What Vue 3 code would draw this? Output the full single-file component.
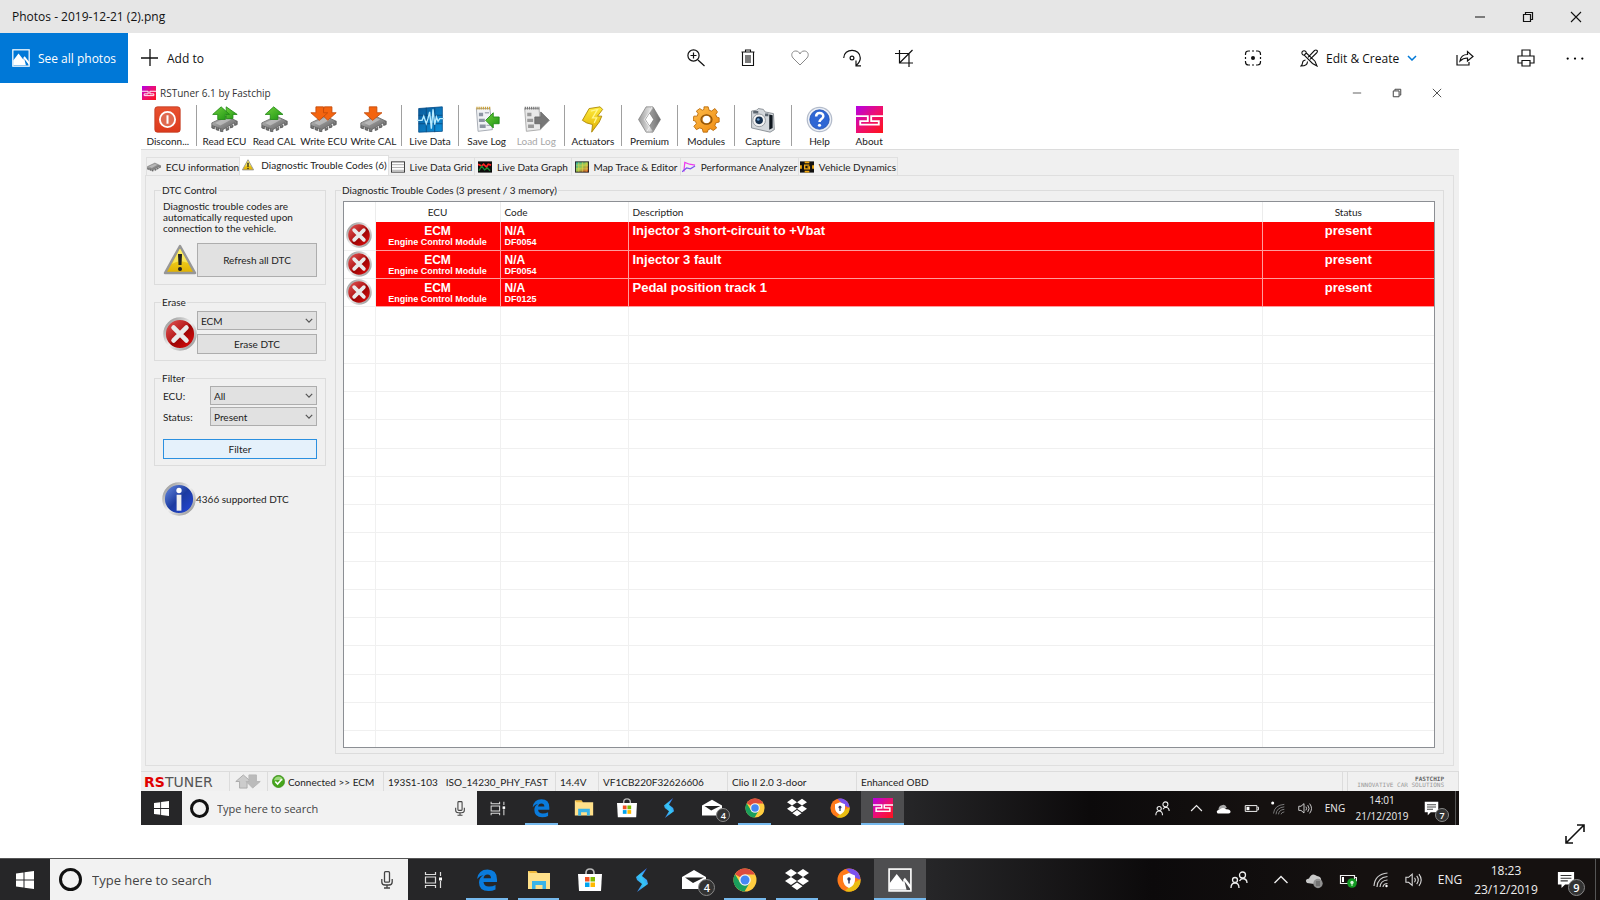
<script setup>
import { ref } from 'vue'

const groups = [
  [{ label: 'Disconn...', icon: 'power' }],
  [
    { label: 'Read ECU', icon: 'read-ecu' },
    { label: 'Read CAL', icon: 'read-cal' },
    { label: 'Write ECU', icon: 'write-ecu' },
    { label: 'Write CAL', icon: 'write-cal' },
  ],
  [{ label: 'Live Data', icon: 'live' }],
  [
    { label: 'Save Log', icon: 'save' },
    { label: 'Load Log', icon: 'load', disabled: true },
  ],
  [{ label: 'Actuators', icon: 'bolt' }],
  [{ label: 'Premium', icon: 'premium' }],
  [{ label: 'Modules', icon: 'gear' }],
  [{ label: 'Capture', icon: 'camera' }],
  [
    { label: 'Help', icon: 'help' },
    { label: 'About', icon: 'rs' },
  ],
]

const tabs = [
  { label: 'ECU information', icon: 'chip' },
  { label: 'Diagnostic Trouble Codes (6)', icon: 'warning', active: true },
  { label: 'Live Data Grid', icon: 'grid' },
  { label: 'Live Data Graph', icon: 'graph' },
  { label: 'Map Trace & Editor', icon: 'map' },
  { label: 'Performance Analyzer', icon: 'perf' },
  { label: 'Vehicle Dynamics', icon: 'dynamics' },
]

const codes = [
  { id: 'DF0054', text: 'Injector 3 short-circuit to +Vbat' },
  { id: 'DF0054', text: 'Injector 3 fault' },
  { id: 'DF0125', text: 'Pedal position track 1' },
]

const innerApps = [
  { name: 'Edge', icon: 'edge', open: true },
  { name: 'File Explorer', icon: 'folder' },
  { name: 'Store', icon: 'store' },
  { name: 'Shortcut', icon: 'swift' },
  { name: 'Mail', icon: 'mail', badge: 4 },
  { name: 'Chrome', icon: 'chrome', open: true },
  { name: 'Dropbox', icon: 'dropbox' },
  { name: 'Secure Browser', icon: 'secure' },
  { name: 'RSTuner', icon: 'rs25', open: true, current: true },
]
const outerApps = [
  { name: 'Edge', icon: 'edge', open: true },
  { name: 'File Explorer', icon: 'folder', open: true },
  { name: 'Store', icon: 'store' },
  { name: 'Shortcut', icon: 'swift' },
  { name: 'Mail', icon: 'mail', badge: 4 },
  { name: 'Chrome', icon: 'chrome', open: true },
  { name: 'Dropbox', icon: 'dropbox', open: true },
  { name: 'Secure Browser', icon: 'secure' },
  { name: 'Photos', icon: 'photos', open: true, current: true },
]
const innerTray = ['people', 'up', 'cloud', 'battery', 'wifi-off', 'sound']
const outerTray = ['people', 'up', 'cloud-paused', 'battery-charge', 'wifi', 'sound']

const eraseEcu = ref('ECM')
const filterEcu = ref('All')
const filterStatus = ref('Present')
</script>

<template>
  <svg class="defs" aria-hidden="true">
    <defs>
      <linearGradient id="g-rs" x1="0" y1="0" x2="1" y2="1"><stop offset="0" stop-color="#b400e6" /><stop offset=".5" stop-color="#ee0f72" /><stop offset="1" stop-color="#ff1418" /></linearGradient>
      <linearGradient id="g-red" x1="0" y1="0" x2="0" y2="1"><stop offset="0" stop-color="#e8512f" /><stop offset="1" stop-color="#dd3a1c" /></linearGradient>
      <linearGradient id="g-green" x1="0" y1="0" x2="1" y2="1"><stop offset="0" stop-color="#6fd03c" /><stop offset="1" stop-color="#1c9412" /></linearGradient>
      <linearGradient id="g-chip" x1="0" y1="0" x2="1" y2="1"><stop offset="0" stop-color="#c4c4c4" /><stop offset="1" stop-color="#5c5c5c" /></linearGradient>
      <linearGradient id="g-gold" x1="0" y1="0" x2="0" y2="1"><stop offset="0" stop-color="#ffec3d" /><stop offset="1" stop-color="#e0b000" /></linearGradient>
      <linearGradient id="g-gear" x1="0" y1="0" x2="1" y2="1"><stop offset="0" stop-color="#ffbd4a" /><stop offset="1" stop-color="#ee8a10" /></linearGradient>
      <linearGradient id="g-metal" x1="0" y1="0" x2="1" y2="0"><stop offset="0" stop-color="#9a9a9a" /><stop offset=".5" stop-color="#dedede" /><stop offset="1" stop-color="#636363" /></linearGradient>
      <linearGradient id="g-ring" x1="0" y1="0" x2="1" y2="1"><stop offset="0" stop-color="#8d8d8d" /><stop offset=".5" stop-color="#f0f0f0" /><stop offset="1" stop-color="#8a8a8a" /></linearGradient>
      <linearGradient id="g-err" x1="0" y1="0" x2="1" y2="1"><stop offset="0" stop-color="#e86060" /><stop offset=".48" stop-color="#b51818" /><stop offset=".52" stop-color="#970404" /><stop offset="1" stop-color="#ef1010" /></linearGradient>
      <linearGradient id="g-info" x1="0" y1="0" x2="1" y2="1"><stop offset="0" stop-color="#6f93e6" /><stop offset=".5" stop-color="#1b3aa0" /><stop offset="1" stop-color="#2548e0" /></linearGradient>
      <linearGradient id="g-live" x1="0" y1="0" x2="1" y2="1"><stop offset="0" stop-color="#0a5a9a" /><stop offset="1" stop-color="#0d92dc" /></linearGradient>
      <linearGradient id="g-swift" x1="1" y1="0" x2="0" y2="1"><stop offset="0" stop-color="#3d63ff" /><stop offset=".5" stop-color="#35c8f5" /><stop offset="1" stop-color="#3b7bea" /></linearGradient>
      <linearGradient id="g-map" x1="0" y1="0" x2="1" y2="1"><stop offset="0" stop-color="#24b6b0" /><stop offset=".5" stop-color="#9ec84a" /><stop offset="1" stop-color="#e23a1c" /></linearGradient>
    </defs>

    <symbol id="i-rs" viewBox="0 0 32 32">
      <rect width="32" height="32" fill="url(#g-rs)" />
      <path d="M0 12H14V18H5V22H27V18H18V12H32" fill="none" stroke="#fff" stroke-width="2.2" />
    </symbol>
    <symbol id="i-rs25" viewBox="0 0 32 32">
      <rect width="32" height="32" fill="url(#g-rs)" />
      <path d="M0 11H14V16H5V21H15M32 11H18V16H27V21H14" fill="none" stroke="#fff" stroke-width="2.4" />
    </symbol>
    <symbol id="i-power" viewBox="0 0 32 32">
      <rect x="1" y="1" width="30" height="30" rx="3" fill="url(#g-red)" stroke="#c23a20" />
      <circle cx="16" cy="16" r="9" fill="#e06a50" stroke="#fff" stroke-width="2.2" />
      <path d="M16 11v10" stroke="#fff" stroke-width="2.4" />
    </symbol>
    <symbol id="i-chip" viewBox="0 0 32 20">
      <path d="M1 9 18 1 31 7 14 17 1 12Z" fill="url(#g-chip)" stroke="#666" stroke-width="1" />
      <path d="M1 12v3l3 1v-3M6 14v3l3 1v-3M11 16v3l3 .6V17M18 15v3l3-1v-3M23 12v3l3-1v-3M28 9v3l3-1V7" fill="#777" stroke="#555" stroke-width="1" />
      <path d="M5 9 18 3 24 5 11 12Z" fill="#c4c4c4" opacity=".7" />
    </symbol>
    <symbol id="i-read-ecu" viewBox="0 0 32 32">
      <use href="#i-chip" y="11" width="32" height="20" />
      <path d="M18 1 31 10H26V15H18Z" fill="url(#g-green)" stroke="#238a17" />
      <path d="M12 1 22 10H17V16H8V10H2Z" fill="url(#g-green)" stroke="#238a17" />
    </symbol>
    <symbol id="i-read-cal" viewBox="0 0 32 32">
      <use href="#i-chip" y="11" width="32" height="20" />
      <path d="M15 1 26 10H20V16H11V10H5Z" fill="url(#g-green)" stroke="#238a17" />
    </symbol>
    <symbol id="i-write-ecu" viewBox="0 0 32 32">
      <use href="#i-chip" y="11" width="32" height="20" />
      <path d="M17 1H26V8H31L21 17 14 10Z" fill="#f4640f" stroke="#c44a08" />
      <path d="M7 1H16V8H21L11 17 1 8H7Z" fill="#f4640f" stroke="#c44a08" />
    </symbol>
    <symbol id="i-write-cal" viewBox="0 0 32 32">
      <use href="#i-chip" y="11" width="32" height="20" />
      <path d="M11 1H20V8H26L15 17 5 8H11Z" fill="#f4640f" stroke="#c44a08" />
    </symbol>
    <symbol id="i-live" viewBox="0 0 32 32">
      <path d="M2 3 30 1V30L2 31Z" fill="url(#g-live)" stroke="#07508c" />
      <path d="M2 11H30M2 21H30M11 2V31M21 2V31" stroke="#0b4a7c" stroke-width="1" />
      <path d="M0 17H6L8 12 11 21 13 15 15 7 17 27 19 4 21 22 23 13 25 18 27 15H32" fill="none" stroke="#b9ecff" stroke-width="1.600" />
    </symbol>
    <symbol id="i-save" viewBox="0 0 32 32">
      <path d="M4 3 20 3 23 28 6 30Z" fill="#f0f2f5" stroke="#9aa0aa" />
      <path d="M4 2.500H21" stroke="#c9a03a" stroke-width="3" stroke-dasharray="1.500 1" />
      <path d="M7 10H12M7 17H14M8 24H15" stroke="#8c95a2" stroke-width="4" />
      <path d="M14 8H19M16 23H21" stroke="#a9b0ba" stroke-width="1.500" />
      <path d="M15 17 24 8V13H31V21H24V26Z" fill="url(#g-green)" stroke="#1d8a12" />
    </symbol>
    <symbol id="i-load" viewBox="0 0 32 32">
      <path d="M2 3 19 3 21 28 4 30Z" fill="#e8e8e8" stroke="#a2a2a2" />
      <path d="M2 2.500H20" stroke="#777" stroke-width="3" stroke-dasharray="1.500 1" />
      <path d="M5 10H10M5 17H12M6 24H13" stroke="#999" stroke-width="4" />
      <path d="M14 13H21V7L31 17 21 27V21H14Z" fill="#777" stroke="#666" />
    </symbol>
    <symbol id="i-bolt" viewBox="0 0 32 32">
      <path d="M12 3 25 1 28 4 22 12H27L24 19 15 31 16 22 9 20 4 17Z" fill="url(#g-gold)" stroke="#a98300" />
      <path d="M14 6 22 4 16 14H21L18 20" fill="none" stroke="#fff68a" stroke-width="1.500" />
    </symbol>
    <symbol id="i-premium" viewBox="0 0 32 32">
      <path fill-rule="evenodd" d="M12 1H20L29 16 20 31H12L3 16ZM16 8 11 16 16 24 21 16Z" fill="url(#g-metal)" stroke="#777" stroke-width=".8" />
      <path d="M21 2 28 16 20 30 16 24 21 16 16 8Z" fill="#777" opacity=".6" />
      <path d="M19 1 16 7 10 16 16 25 13 30" fill="none" stroke="#f4f4f4" stroke-width="1" />
    </symbol>
    <symbol id="i-gear" viewBox="0 0 32 32">
      <path fill-rule="evenodd" d="M13 1 18 1 19 5 22 6 26 3 29 7 27 10 28 13 31 14 31 19 27 20 26 23 28 26 24 29 21 27 18 28 17 31 12 31 11 27 8 26 4 28 1 24 4 21 3 18 0 17 1 12 5 12 6 9 4 6 8 3 11 5 13 4ZM16 11a5 5 0 1 0 .1 0Z" fill="url(#g-gear)" stroke="#b76707" />
      <ellipse cx="16" cy="16" rx="6.500" ry="5.500" fill="none" stroke="#8f5206" stroke-width="1.500" />
    </symbol>
    <symbol id="i-camera" viewBox="0 0 32 32">
      <path d="M3 6 9 5 11 3 17 4 19 7 29 9 30 28 25 31 3 26Z" fill="#d4d8dc" stroke="#7f858b" />
      <path d="M24 10 28 11 28 26 24 28Z" fill="#111820" />
      <circle cx="12" cy="17" r="7.500" fill="#f3f3f3" stroke="#8b9095" />
      <circle cx="12" cy="17" r="4.500" fill="#16304e" /><circle cx="11" cy="16" r="1.600" fill="#6fa5da" />
      <path d="M5 6H11V9H5ZM19 9h4v3h-4Z" fill="#5c6670" />
    </symbol>
    <symbol id="i-help" viewBox="0 0 32 32">
      <circle cx="16" cy="16" r="14.500" fill="#eef2f8" stroke="#b4bccb" stroke-width="1.500" />
      <circle cx="16" cy="16" r="11.500" fill="#2e66d4" stroke="#2352b2" />
      <path d="M12 12.500c0-5.500 8.500-5.500 8.500-.5 0 3.500-4.500 3.500-4.500 7" fill="none" stroke="#fff" stroke-width="3" />
      <circle cx="16" cy="22.800" r="1.900" fill="#fff" />
    </symbol>
    <symbol id="i-warning" viewBox="0 0 34 32">
      <path d="M17 2 32 29H2Z" fill="url(#g-gold)" stroke="#979797" stroke-width="2.500" stroke-linejoin="round" />
      <path d="M17 4.500 9 20Q16 15 25 19Z" fill="#fff98a" opacity=".55" />
      <path d="M15 10H19L18.500 21H15.500Z" fill="#222" /><circle cx="17" cy="25" r="2" fill="#222" />
    </symbol>
    <symbol id="i-error" viewBox="0 0 32 32">
      <circle cx="16" cy="16" r="14.500" fill="url(#g-err)" stroke="url(#g-ring)" stroke-width="2.500" />
      <path d="M10 10 22 22M22 10 10 22" stroke="#e9e9e9" stroke-width="4.500" stroke-linecap="round" />
    </symbol>
    <symbol id="i-info" viewBox="0 0 32 32">
      <circle cx="16" cy="16" r="14.500" fill="url(#g-info)" stroke="url(#g-ring)" stroke-width="2.500" />
      <circle cx="16" cy="8" r="2.500" fill="#fff" /><path d="M16 12V27" stroke="#eee" stroke-width="4.500" />
    </symbol>
    <symbol id="i-grid" viewBox="0 0 15 12">
      <rect x=".5" y=".5" width="14" height="11" fill="#fff" stroke="#333" />
      <path d="M1 3.500H14M1 6.500H14M1 9.500H14" stroke="#aaa" />
    </symbol>
    <symbol id="i-graph" viewBox="0 0 15 12">
      <rect width="15" height="12" fill="#0d0d0d" />
      <path d="M0 3 4 5 6 3 9 6 11 3 14 4" fill="none" stroke="#f22" stroke-width="1.800" />
      <path d="M1 10 4 5 7 9 10 7 13 10" fill="none" stroke="#198a35" stroke-width="1.400" />
    </symbol>
    <symbol id="i-map" viewBox="0 0 15 12">
      <rect x=".5" y=".5" width="14" height="11" fill="url(#g-map)" stroke="#222" />
      <path d="M4 1V11M8 1V11M12 1V11M1 4H14M1 8H14" stroke="#e8d64e" stroke-width=".6" />
    </symbol>
    <symbol id="i-perf" viewBox="0 0 15 12">
      <path d="M2 11 3 1 8 3 14 4" fill="none" stroke="#ee3df0" stroke-width="1.300" />
      <path d="M0 11 5 7 9 8 14 5" fill="none" stroke="#7a55ee" stroke-width="1.300" />
    </symbol>
    <symbol id="i-dynamics" viewBox="0 0 15 12">
      <rect width="15" height="12" fill="#111" />
      <path d="M5 0h5v2H5ZM5 10h5v2H5ZM0 4h2v4H0ZM13 4h2v4h-2Z" fill="#f2a912" />
      <path d="M10 4H5V8H10V6H8" fill="none" stroke="#f2a912" stroke-width="1.500" />
    </symbol>

    <symbol id="i-min" viewBox="0 0 12 12"><path d="M1 6H11" stroke="currentColor" /></symbol>
    <symbol id="i-max" viewBox="0 0 12 12"><path d="M1.500 3.500H8.500V10.500H1.500ZM3.500 3V1.500H10.500V8.500H9" fill="none" stroke="currentColor" stroke-width="1.200" /></symbol>
    <symbol id="i-close" viewBox="0 0 12 12"><path d="M1 1 11 11M11 1 1 11" stroke="currentColor" stroke-width="1.100" /></symbol>
    <symbol id="i-photos" viewBox="0 0 22 22">
      <rect x="1" y="1" width="20" height="20" fill="none" stroke="#fff" stroke-width="1.500" />
      <path d="M1.500 20V14L8 5.500 14 13V10.500L15.500 9 21 16V20L15 12 17 20Z" fill="#fff" />
    </symbol>
    <symbol id="i-plus" viewBox="0 0 18 18"><path d="M9 0V17M0 9H17" stroke="currentColor" stroke-width="1.300" /></symbol>
    <symbol id="i-zoom" viewBox="0 0 18 18"><path d="M11 11 17.500 17M6.500 3.500V9.500M3.500 6.500H9.500" stroke="currentColor" stroke-width="1.200" /><circle cx="6.500" cy="6.500" r="5.600" fill="none" stroke="currentColor" stroke-width="1.200" /></symbol>
    <symbol id="i-trash" viewBox="0 0 18 18"><path d="M2.500 3H15.500M6.500 3V1H11.500V3M3.500 3V16.500H14.500V3M7 6V14M9 6V14M11 6V14" fill="none" stroke="currentColor" stroke-width="1.100" /></symbol>
    <symbol id="i-heart" viewBox="0 0 18 18"><path d="M9 16 2 9C-.5 6 1 2 4.800 2 7 2 8.400 3.400 9 5 9.600 3.400 11 2 13.200 2 17 2 18.500 6 16 9Z" fill="none" stroke="#888" /></symbol>
    <symbol id="i-rotate" viewBox="0 0 18 18"><path d="M.7 9C.7-1 17.300-1.500 17.300 9c0 3.500-2.500 6-4 7.300M13 11.500V16.800H18" fill="none" stroke="currentColor" stroke-width="1.200" /><circle cx="9" cy="9" r="1.900" fill="none" stroke="currentColor" stroke-width="1.200" /></symbol>
    <symbol id="i-crop" viewBox="0 0 18 18"><path d="M4.500 1V14H18M0 4.500H14V18M4.500 14 17.500 1" fill="none" stroke="currentColor" stroke-width="1.200" /></symbol>
    <symbol id="i-scan" viewBox="0 0 18 18"><path d="M1.500 6V5Q1.500 2 4.500 2H6M12 2h1.500q3 0 3 3v1M16.500 12v1q0 3-3 3H12M6 16H4.500q-3 0-3-3v-1M8 2h2M8 16h2M1.500 8v2M16.500 8v2" fill="none" stroke="currentColor" stroke-width="1.200" /><circle cx="9" cy="9" r="2" fill="currentColor" /></symbol>
    <symbol id="i-edit" viewBox="0 0 18 18"><path d="M4.200 6.200 12.500 14.500 17 17 15 12.200 6.300 4M4.200 6.200A2.200 2.200 0 1 1 6.300 4ZM8 8.300 14.500 1.500Q16 .6 17 1.500T16.500 4L10 10.300M7.500 12.500Q7.500 17 1 17 2.500 15.500 2.600 13.500T5.500 11" fill="none" stroke="currentColor" stroke-width="1.100" /></symbol>
    <symbol id="i-down" viewBox="0 0 10 6"><path d="M1 1 5 5 9 1" fill="none" stroke="currentColor" stroke-width="1.500" /></symbol>
    <symbol id="i-share" viewBox="0 0 18 18"><path d="M1 6V16H13V13M4 12Q5 5.500 11.500 5.500V2.500L17 7.500 11.500 12V9Q7 9 4 12Z" fill="none" stroke="currentColor" stroke-width="1.200" /></symbol>
    <symbol id="i-print" viewBox="0 0 18 18"><path d="M5 7V1H13V7M5 14H1V7H17V14H13M5 11.500H13V17H5Z" fill="none" stroke="currentColor" stroke-width="1.200" /></symbol>
    <symbol id="i-more" viewBox="0 0 16 16"><circle cx="1.500" cy="8.500" r="1" /><circle cx="8" cy="8.500" r="1" /><circle cx="14.500" cy="8.500" r="1" /></symbol>
    <symbol id="i-expand" viewBox="0 0 20 20"><path d="M1 19 19 1M12 1H19V8M1 12V19H8" fill="none" stroke="currentColor" stroke-width="1.600" /></symbol>

    <symbol id="i-win" viewBox="0 0 18 18"><path d="M0 2.500 7.500 1.500V8.500H0ZM8.500 1.300 18 0V8.500H8.500ZM0 9.500H7.500V16.500L0 15.500ZM8.500 9.500H18V18L8.500 16.700Z" fill="#fff" /></symbol>
    <symbol id="i-mic" viewBox="0 0 12 18"><rect x="3.500" y=".7" width="5" height="10.500" rx="1" fill="none" stroke="#444" stroke-width="1.300" /><path d="M.8 8V11Q.8 14 4 14H8Q11.200 14 11.200 11V8M6 14V17M3 17H9" fill="none" stroke="#444" stroke-width="1.300" /></symbol>
    <symbol id="i-view" viewBox="0 0 20 20"><path d="M2.500 2V4.500H12.500V2M2.500 18V15.500H12.500V18M2.500 7H12.500V13H2.500ZM17.500 2V6M17.500 11V18" fill="none" stroke="#ddd" stroke-width="1.200" /><rect x="16" y="7.500" width="3" height="3" fill="#fff" /></symbol>
    <symbol id="i-edge" viewBox="0 0 24 24"><path d="M2 11Q3.500 1.500 12.500 1.500 22 1.500 22 11.500V14H8.500Q9 18.500 14 18.500 17.500 18.500 20.500 17V21.500Q17.500 23 13.500 23 4 23 4 14.500 4 9.500 8.500 7 5 7.500 2 11ZM8.500 10.300H16Q16 6.500 12.500 6.500 9 6.500 8.500 10.300Z" fill="#0a7bdc" fill-rule="evenodd" /></symbol>
    <symbol id="i-folder" viewBox="0 0 24 24"><path d="M1 3H9L10.500 5H23V21H1Z" fill="#ffe08a" /><path d="M1 3H9L10.500 5H3Z" fill="#f0b93c" /><path d="M5 21V13H19V21H15.500V17H8.500V21Z" fill="#3ab4e8" /></symbol>
    <symbol id="i-store" viewBox="0 0 24 24"><path d="M8 7V5Q8 1 12 1T16 5V7" fill="none" stroke="#bbb" stroke-width="1.700" /><path d="M0 6H24L23 23H1Z" fill="#fff" /><path d="M7 9H11.500V13.500H7Z" fill="#f15022" /><path d="M12.500 9H17V13.500H12.500Z" fill="#7fba00" /><path d="M7 14.500H11.500V19H7Z" fill="#00a4ef" /><path d="M12.500 14.500H17V19H12.500Z" fill="#ffb900" /></symbol>
    <symbol id="i-swift" viewBox="0 0 24 24"><path d="M17 0 6 9 7 12 12 16 7 24 18 16 17 12 12 8Z" fill="url(#g-swift)" /></symbol>
    <symbol id="i-mail" viewBox="0 0 24 24"><path d="M0 9 12 2 24 9V21H0Z" fill="#fff" /><path d="M3 9.500H22L11 15Z" fill="#222" /></symbol>
    <symbol id="i-chrome" viewBox="0 0 24 24"><circle cx="12" cy="12" r="11.500" fill="#ffcd40" /><path d="M12 12 2 6.200A11.500 11.500 0 0 1 22 6.500H12Z" fill="#dd4b3e" /><path d="M12 12 7 14.500 2 6.200A11.500 11.500 0 0 0 11.500 23.500L16.500 15Z" fill="#1a9f5c" /><circle cx="12" cy="12" r="5.800" fill="#f4f4f4" /><circle cx="12" cy="12" r="4.500" fill="#4486f4" /></symbol>
    <symbol id="i-dropbox" viewBox="0 0 24 24"><path d="M6 1 12 5 6 9 0 5ZM18 1 24 5 18 9 12 5ZM6 9 12 13 6 17 0 13ZM18 9 24 13 18 17 12 13ZM12 14.500 17.500 18.200 12 22 6.500 18.200Z" fill="#fff" /></symbol>
    <symbol id="i-secure" viewBox="0 0 24 24"><circle cx="12" cy="12" r="11.500" fill="#ff7a1a" /><path d="M9 .9A11.500 11.500 0 0 1 23.500 12L17 9Z" fill="#7b52ee" /><path d="M23.500 11A11.500 11.500 0 0 1 8 23L15 16Z" fill="#e9bd12" /><path d="M12 5 18 7.500V12Q18 17 12 20 6 17 6 12V7.500Z" fill="#fff" /><circle cx="12" cy="11" r="1.700" fill="#333a66" /><path d="M12 11V15.500" stroke="#333a66" stroke-width="1.500" /></symbol>

    <symbol id="i-people" viewBox="0 0 18 18"><circle cx="12.500" cy="4" r="3" fill="none" stroke="#eee" stroke-width="1.300" /><circle cx="5" cy="9" r="2.500" fill="none" stroke="#eee" stroke-width="1.300" /><path d="M1 17Q1 12 5 12T9 17M9.500 10Q11 7.500 13 7.500 17 8 17 12" fill="none" stroke="#eee" stroke-width="1.300" /></symbol>
    <symbol id="i-up" viewBox="0 0 18 18"><path d="M2.500 12 9 5.500 15.500 12" fill="none" stroke="#eee" stroke-width="1.400" /></symbol>
    <symbol id="i-cloud" viewBox="0 0 18 18"><path d="M3 10Q3 6 7 5 11 3 13 8L10 10 3 13Z" fill="#aaa" /><path d="M2 15Q-1 11.500 4 10.500 8 6.500 12 10 17 9.500 17.500 13 17.500 15 15 15Z" fill="#fff" /></symbol>
    <symbol id="i-cloud-paused" viewBox="0 0 18 18"><path d="M2 12Q-1 8.500 4 7.500 7 1 12 5 17 6 16 10L9 13Z" fill="#c9c9c9" /><circle cx="13" cy="12.500" r="4.700" fill="#909090" /><path d="M12 10V15M14 10V15" stroke="#555" stroke-width="1" /></symbol>
    <symbol id="i-battery" viewBox="0 0 18 18"><path d="M1.500 5.500H15.500V12.500H1.500ZM16 7.500H17.500V10.500H16" fill="none" stroke="#eee" stroke-width="1.200" /><path d="M3 7H6.500V11H3Z" fill="#fff" /></symbol>
    <symbol id="i-battery-charge" viewBox="0 0 18 18"><path d="M1.500 4.500H15.500V12.500H1.500ZM16 6.500H17.500V10H16" fill="none" stroke="#eee" stroke-width="1.200" /><path d="M3 6H5V11H3Z" fill="#fff" /><circle cx="13" cy="12" r="4.800" fill="#129a22" /><circle cx="13" cy="11.500" r="1.700" fill="#d9f5dc" /><path d="M13 12V15" stroke="#d9f5dc" /></symbol>
    <symbol id="i-wifi" viewBox="0 0 18 18"><path d="M2 15Q3 3 15.500 2M5 16Q5.500 6.500 15.500 5.500M8 16Q8.500 9.500 15.500 9M11 16Q11.500 12.500 15.500 12.500" fill="none" stroke="#ccc" stroke-width="1.200" /><circle cx="14.500" cy="15" r="1.200" fill="#fff" /></symbol>
    <symbol id="i-wifi-off" viewBox="0 0 18 18"><path d="M3 15Q4 5 16 4M6 16Q6.500 8 16 7M9 16Q9.500 10.500 16 10M12 16Q12.500 13.500 16 13" fill="none" stroke="#777" stroke-width="1.200" /><circle cx="2" cy="2.500" r="1.800" fill="#fff" /></symbol>
    <symbol id="i-sound" viewBox="0 0 20 18"><path d="M1 6H4L8 2.500V15L4 11.500H1ZM10.500 6.500Q12.500 9 10.500 11.500M13 4.500Q16.500 9 13 13.500M15.500 2.500Q20.500 9 15.500 15.500" fill="none" stroke="#ddd" stroke-width="1.200" /></symbol>
    <symbol id="i-note" viewBox="0 0 20 20"><path d="M1 1H19V15H9L5 19V15H1Z" fill="#fff" /><path d="M4 5H16M4 8H16M4 11H12" stroke="#333" stroke-width="1.200" /></symbol>
    <symbol id="i-updown" viewBox="0 0 28 16"><path d="M9 1 17 8H13V15H5V8H1Z" fill="#ccc" stroke="#aaa" /><path d="M15 1H23V8H27L19 15 12 8H15Z" fill="#bbb" stroke="#b5b5b5" /></symbol>
    <symbol id="i-ok" viewBox="0 0 14 14"><circle cx="7" cy="7" r="6.600" fill="#46a51b" stroke="#2f8010" stroke-width=".6" /><path d="M2 6Q3 1.500 7 1.500T12 6Q7 4.500 2 6Z" fill="#9bd87c" /><path d="M3.500 7 6 9.800 10.500 4.500" fill="none" stroke="#fff" stroke-width="1.800" /></symbol>
  </svg>

  <div class="desktop">
    <header class="titlebar">
      <span>Photos - 2019-12-21 (2).png</span>
      <div class="winctl">
        <button v-for="c in ['min', 'max', 'close']" :key="c" :aria-label="c"><svg><use :href="'#i-' + c" /></svg></button>
      </div>
    </header>

    <nav class="bar">
      <div class="bar-left">
        <button class="all"><svg><use href="#i-photos" /></svg>See all photos</button>
        <button class="add"><svg><use href="#i-plus" /></svg>Add to</button>
      </div>
      <div class="bar-mid">
        <button v-for="c in ['zoom', 'trash', 'heart', 'rotate', 'crop']" :key="c" :aria-label="c"><svg><use :href="'#i-' + c" /></svg></button>
      </div>
      <div class="bar-right">
        <button class="scan" aria-label="scan"><svg><use href="#i-scan" /></svg></button>
        <button class="edit"><svg><use href="#i-edit" /></svg>Edit &amp; Create<svg class="caret"><use href="#i-down" /></svg></button>
        <button class="wide" aria-label="share"><svg><use href="#i-share" /></svg></button>
        <button class="wide" aria-label="print"><svg><use href="#i-print" /></svg></button>
        <button class="more" aria-label="more"><svg><use href="#i-more" /></svg></button>
      </div>
    </nav>

    <main class="stage">
      <div class="shot">
        <header class="app-title">
          <svg><use href="#i-rs" /></svg><span>RSTuner 6.1 by Fastchip</span>
          <div class="winctl small">
            <button v-for="c in ['min', 'max', 'close']" :key="c" :aria-label="c"><svg><use :href="'#i-' + c" /></svg></button>
          </div>
        </header>

        <div class="tools">
          <div class="tools-row">
            <template v-for="(g, i) in groups" :key="i">
              <span v-if="i" class="sep"></span>
              <button v-for="t in g" :key="t.label" :disabled="t.disabled"><svg><use :href="'#i-' + t.icon" /></svg>{{ t.label }}</button>
            </template>
          </div>
        </div>

        <div class="work">
          <div class="tabs" role="tablist">
            <button v-for="t in tabs" :key="t.label" role="tab" :class="{ active: t.active }"><svg><use :href="'#i-' + t.icon" /></svg>{{ t.label }}</button>
          </div>

          <div class="panel">
            <aside class="side">
              <fieldset>
                <legend>DTC Control</legend>
                <p>Diagnostic trouble codes are automatically requested upon connection to the vehicle.</p>
                <div class="line refresh">
                  <svg class="big"><use href="#i-warning" /></svg>
                  <button class="btn tall">Refresh all DTC</button>
                </div>
              </fieldset>
              <fieldset>
                <legend>Erase</legend>
                <div class="line">
                  <svg class="big"><use href="#i-error" /></svg>
                  <div class="stack">
                    <div class="pick">
                      <select v-model="eraseEcu" aria-label="ECU to erase"><option>ECM</option></select>
                      <svg><use href="#i-down" /></svg>
                    </div>
                    <button class="btn">Erase DTC</button>
                  </div>
                </div>
              </fieldset>
              <fieldset>
                <legend>Filter</legend>
                <div class="field">
                  <label for="f-ecu">ECU:</label>
                  <div class="pick"><select id="f-ecu" v-model="filterEcu"><option>All</option></select><svg><use href="#i-down" /></svg></div>
                </div>
                <div class="field">
                  <label for="f-status">Status:</label>
                  <div class="pick"><select id="f-status" v-model="filterStatus"><option>Present</option></select><svg><use href="#i-down" /></svg></div>
                </div>
                <button class="btn focus">Filter</button>
              </fieldset>
              <div class="supported"><svg class="big"><use href="#i-info" /></svg>4366 supported DTC</div>
            </aside>

            <fieldset class="list">
              <legend>Diagnostic Trouble Codes (3 present / 3 memory)</legend>
              <div class="frame">
                <table>
                  <colgroup><col class="c-icon" /><col class="c-ecu" /><col class="c-code" /><col /><col class="c-status" /></colgroup>
                  <thead>
                    <tr><th></th><th class="mid">ECU</th><th>Code</th><th>Description</th><th class="mid">Status</th></tr>
                  </thead>
                  <tbody>
                    <tr v-for="(c, i) in codes" :key="i" class="fault">
                      <td class="ico"><svg><use href="#i-error" /></svg></td>
                      <td class="mid"><b>ECM</b><small>Engine Control Module</small></td>
                      <td><b>N/A</b><small>{{ c.id }}</small></td>
                      <td class="desc">{{ c.text }}</td>
                      <td class="desc mid">present</td>
                    </tr>
                    <tr v-for="n in 15" :key="'e' + n"><td v-for="k in 5" :key="k"></td></tr>
                    <tr class="rest"><td v-for="k in 5" :key="k"></td></tr>
                  </tbody>
                </table>
              </div>
            </fieldset>
          </div>
        </div>

        <footer class="status">
          <span class="logo"><b>RS</b>TUNER</span>
          <span class="arrows"><svg><use href="#i-updown" /></svg></span>
          <span class="conn"><svg><use href="#i-ok" /></svg>Connected &gt;&gt; ECM</span>
          <span class="proto"><i>193S1-103</i><i>ISO_14230_PHY_FAST</i></span>
          <span>14.4V</span>
          <span>VF1CB220F32626606</span>
          <span>Clio II 2.0 3-door</span>
          <span>Enhanced OBD</span>
          <span class="thin"></span>
          <span class="maker"><b>FASTCHIP</b>INNOVATIVE CAR SOLUTIONS</span>
        </footer>

        <div class="taskbar inner">
          <button class="start" aria-label="Start"><svg><use href="#i-win" /></svg></button>
          <label class="search">
            <span class="ring"></span>
            <input type="text" placeholder="Type here to search" aria-label="Search" />
            <svg><use href="#i-mic" /></svg>
          </label>
          <button class="view" aria-label="Task view"><svg><use href="#i-view" /></svg></button>
          <div class="apps">
            <button v-for="a in innerApps" :key="a.name" :aria-label="a.name" :class="{ open: a.open, current: a.current }">
              <svg><use :href="'#i-' + a.icon" /></svg><span v-if="a.badge" class="badge">{{ a.badge }}</span>
            </button>
          </div>
          <div class="tray">
            <svg v-for="t in innerTray" :key="t"><use :href="'#i-' + t" /></svg>
            <span>ENG</span>
            <time>14:01<br />21/12/2019</time>
            <span class="note"><svg><use href="#i-note" /></svg><span class="badge">7</span></span>
            <span class="edge-line"></span>
          </div>
        </div>
      </div>
      <button class="expand" aria-label="Full screen"><svg><use href="#i-expand" /></svg></button>
    </main>

    <div class="taskbar outer">
      <button class="start" aria-label="Start"><svg><use href="#i-win" /></svg></button>
      <label class="search">
        <span class="ring"></span>
        <input type="text" placeholder="Type here to search" aria-label="Search" />
        <svg><use href="#i-mic" /></svg>
      </label>
      <button class="view" aria-label="Task view"><svg><use href="#i-view" /></svg></button>
      <div class="apps">
        <button v-for="a in outerApps" :key="a.name" :aria-label="a.name" :class="{ open: a.open, current: a.current }">
          <svg><use :href="'#i-' + a.icon" /></svg><span v-if="a.badge" class="badge">{{ a.badge }}</span>
        </button>
      </div>
      <div class="tray">
        <svg v-for="t in outerTray" :key="t"><use :href="'#i-' + t" /></svg>
        <span>ENG</span>
        <time>18:23<br />23/12/2019</time>
        <span class="note"><svg><use href="#i-note" /></svg><span class="badge">9</span></span>
        <span class="edge-line"></span>
      </div>
    </div>
  </div>
</template>

<style>
body { margin: 0; background: #fff; }
</style>

<style scoped>
* { box-sizing: border-box; }
.defs { position: absolute; width: 0; height: 0; }
.desktop { display: flex; flex-direction: column; min-height: 100vh; background: #fff; color: #111; font: 12px "Open Sans", "Noto Sans", sans-serif; }
button { border: 0; padding: 0; margin: 0; background: none; color: inherit; font: inherit; display: flex; align-items: center; justify-content: center; }
svg { flex: none; display: block; }

.titlebar { display: flex; align-items: center; justify-content: space-between; height: 33px; padding-left: 12px; background: #e6e6e6; }
.winctl { display: flex; }
.winctl button { width: 48px; height: 33px; }
.winctl svg { width: 12px; height: 12px; }
.winctl.small { margin-left: auto; color: #444; }
.winctl.small button { width: 40px; height: 20px; }
.winctl.small svg { width: 10px; height: 10px; }

.bar { display: grid; grid-template-columns: 1fr auto 1fr; height: 50px; }
.bar-left, .bar-mid, .bar-right { display: flex; }
.bar svg { width: 18px; height: 18px; }
.bar-right { justify-content: flex-end; padding-right: 6px; }
.all { width: 128px; background: #0078d7; color: #fff; gap: 8px; }
.add { gap: 8px; margin-left: 13px; }
.bar-mid button { width: 52px; }
.scan { width: 52px; }
.edit { width: 155px; padding-left: 21px; gap: 8px; justify-content: flex-start; }
.bar .caret { width: 10px; height: 6px; color: #0078d7; }
.wide { width: 61px; }
.more { width: 38px; }

.stage { position: relative; flex: 1; display: flex; padding: 0 141px 33px; }
.expand { position: absolute; right: 15px; bottom: 14px; }
.expand svg { width: 20px; height: 20px; }
.shot { flex: 1; min-width: 0; display: flex; flex-direction: column; font: 10px "Lato", "Liberation Sans", sans-serif; }

.app-title { display: flex; align-items: center; gap: 4px; height: 20px; padding: 0 2px 0 1px; color: #333; }
.app-title > svg { width: 14px; height: 14px; }
.app-title, .taskbar { font-family: "Open Sans", "Noto Sans", sans-serif; }

.tools { height: 47px; border-bottom: 1px solid #dcdcdc; }
.tools-row { display: flex; width: 753px; height: 44px; padding-left: 2px; }
.tools button { flex: 1 1 0; min-width: 0; flex-direction: column; justify-content: flex-start; gap: 1px; padding-top: 3px; line-height: 14px; white-space: nowrap; color: #222; }
.tools button:disabled { color: #a8a8a8; }
.tools svg { width: 27px; height: 27px; }
.sep { width: 7px; height: 41px; margin-top: 2px; background: linear-gradient(#a0a0a0, #a0a0a0) center / 1px 100% no-repeat; }

.work { flex: 1; display: flex; flex-direction: column; padding: 5px 5px 5px 4px; background: #f0f0f0; }
.tabs { display: grid; grid-template-columns: 94px 149px 86px 97px 109px 118px 99px; padding-left: 1px; align-items: end; }
.tabs button { height: 18px; gap: 5px; border: 1px solid #e0e0e0; border-bottom: 0; white-space: nowrap; color: #222; }
.tabs button + button { border-left: 0; }
.tabs button.active { height: 20px; background: #fff; gap: 6px; padding-bottom: 2px; }
.tabs svg { width: 14px; height: 12px; }
.panel { flex: 1; display: flex; gap: 9px; padding: 8px 9px 11px 8px; border: 1px solid #dfdfdf; }

fieldset { min-width: 0; margin: 0; padding: 0 8px; border: 1px solid #dcdcdc; }
legend { padding: 0 1px; margin-left: -2px; line-height: 12px; color: #222; }
.side { width: 172px; display: flex; flex-direction: column; gap: 11px; color: #222; }
.side p { margin: 5px 0 9px; line-height: 11px; }
.side .big { width: 34px; height: 34px; }
.line { display: flex; align-items: center; }
.refresh { padding-bottom: 7px; }
.btn { width: 100%; height: 20px; border: 1px solid #adadad; background: #e1e1e1; color: #222; }
.btn.tall { height: 34px; }
.btn.focus { height: 20px; margin: 13px 0 6px; border: 1px solid #2b90e0; background: #e5f1fb; }
.stack { flex: 1; display: flex; flex-direction: column; gap: 4px; padding: 3px 0 6px; }
.pick { position: relative; flex: 1; display: flex; }
.pick select { width: 100%; height: 19px; padding: 0 3px; border: 1px solid #adadad; border-radius: 0; background: #e1e1e1; color: #222; font: inherit; appearance: none; }
.pick svg { position: absolute; right: 4px; top: 7px; width: 8px; height: 5px; color: #555; pointer-events: none; }
.field { display: flex; align-items: center; padding-top: 2px; }
.field label { width: 47px; }
.supported { display: flex; align-items: center; padding: 5px 0 0 8px; }

.list { flex: 1; display: flex; padding: 5px 8px 5px 7px; }
.frame { flex: 1; display: grid; border: 1px solid #8c8f94; background: #fff; }
table { width: 100%; height: 100%; border-collapse: collapse; table-layout: fixed; }
.c-icon { width: 31px; }
.c-ecu { width: 125px; }
.c-code { width: 128px; }
.c-status { width: 172px; }
th { height: 20px; padding: 0 4px; text-align: left; font-weight: 400; color: #222; border-right: 1px solid #ececec; }
td { height: 28px; padding: 0 4px; border-right: 1px solid #f0f0f0; border-bottom: 1px solid #f0f0f0; vertical-align: top; }
th:last-child, td:last-child { border-right: 0; }
th.mid, td.mid { text-align: center; }
.rest td { height: 16px; border-bottom: 0; }
.fault td { background: #f00; color: #fff; font-family: "Liberation Sans", Arial, sans-serif; font-weight: 700; border-color: #ff9c9c; }
.fault td.ico { padding: 0 2px; background: #fff; border-color: #f0f0f0; }
.ico svg { width: 26px; height: 26px; }
.fault b { display: block; padding-top: 2px; font-size: 12px; line-height: 14px; }
.fault small { display: block; font-size: 9px; line-height: 9px; white-space: nowrap; }
.fault .desc { padding-top: 2px; font-size: 13px; line-height: 14px; }

.status { display: grid; grid-template-columns: 89px 38px 116px 172px 43px 129px 129px 1fr 4px 112px; height: 20px; background: #f0f0f0; border-top: 1px solid #dcdcdc; color: #222; }
.status > span { display: flex; align-items: center; padding-left: 4px; border-right: 1px solid #dcdcdc; white-space: nowrap; }
.status .logo { padding-left: 3px; font: 14px/18px "DejaVu Sans", sans-serif; color: #555; }
.logo b { color: #e00000; }
.arrows svg { width: 28px; height: 15px; }
.conn { gap: 3px; }
.conn svg { width: 13px; height: 13px; }
.proto i { font-style: normal; margin-right: 8px; }
.status .maker { flex-direction: column; align-items: flex-end; justify-content: center; padding-right: 14px; font: 6px/6px "DejaVu Sans Mono", monospace; color: #999; }
.maker b { color: #666; }

.taskbar { display: flex; background: linear-gradient(90deg, #262628 0 58%, #0c0a0b 72%, #151110 85%); color: #eee; }
.taskbar.outer { height: 42px; border-top: 1px solid #555; }
.taskbar.inner { height: 34px; font-size: 10px; }
.start { background: #262628; }
.outer .start { width: 50px; }
.outer .start svg { width: 18px; height: 18px; }
.inner .start { width: 41px; }
.inner .start svg { width: 15px; height: 15px; }
.search { display: flex; align-items: center; background: #f2f2f2; }
.outer .search { width: 358px; padding: 0 15px 0 9px; gap: 10px; }
.inner .search { width: 295px; padding: 0 12px 0 8px; gap: 8px; }
.ring { flex: none; border: 3px solid #111; border-radius: 50%; }
.outer .ring { width: 23px; height: 23px; }
.inner .ring { width: 19px; height: 19px; }
.search input { flex: 1; min-width: 0; padding: 0; border: 0; outline: 0; background: none; font: inherit; color: #333; }
.search input::placeholder { color: #444; opacity: 1; }
.outer .search input { font-size: 13px; }
.inner .search input { font-size: 11px; }
.outer .search svg { width: 12px; height: 18px; }
.inner .search svg { width: 10px; height: 15px; }
.view { padding-right: 3px; }
.outer .view { width: 53px; }
.outer .view svg { width: 20px; height: 20px; }
.inner .view { width: 43px; }
.inner .view svg { width: 17px; height: 17px; }
.apps { display: flex; }
.outer .apps { width: 465px; }
.inner .apps { width: 384px; }
.apps button { position: relative; flex: 1 1 0; }
.outer .apps svg { width: 24px; height: 24px; }
.inner .apps svg { width: 20px; height: 20px; }
.open::after { content: ""; position: absolute; left: 5px; right: 5px; bottom: 0; height: 2px; background: #76b9ed; }
.current { background: #4e4e50; }
.current::after { left: 0; right: 0; }
.badge { position: absolute; display: flex; align-items: center; justify-content: center; border: 1px solid #888; border-radius: 50%; background: #333; color: #fff; font-weight: 600; }
.outer .badge { width: 17px; height: 17px; right: 4px; bottom: 4px; font-size: 11px; }
.inner .badge { width: 14px; height: 14px; right: 3px; bottom: 3px; font-size: 9px; }
.tray { display: grid; margin-left: auto; align-items: center; justify-items: center; }
.outer .tray { grid-template-columns: 52px 32px 34px 33px 34px 32px 40px 72px 53px 5px; }
.inner .tray { grid-template-columns: 42px 27px 27px 28px 27px 27px 32px 62px 42px 4px; }
.outer .tray svg { width: 18px; height: 18px; }
.inner .tray svg { width: 15px; height: 15px; }
.tray time { text-align: center; }
.outer .tray time { line-height: 19px; }
.inner .tray time { line-height: 16px; }
.note { position: relative; display: flex; align-items: center; justify-content: center; width: 100%; height: 100%; padding-right: 6px; }
.outer .note .badge { right: 10px; }
.inner .note .badge { right: 6px; }
.edge-line { width: 100%; height: 100%; border-left: 1px solid #555; }
</style>
